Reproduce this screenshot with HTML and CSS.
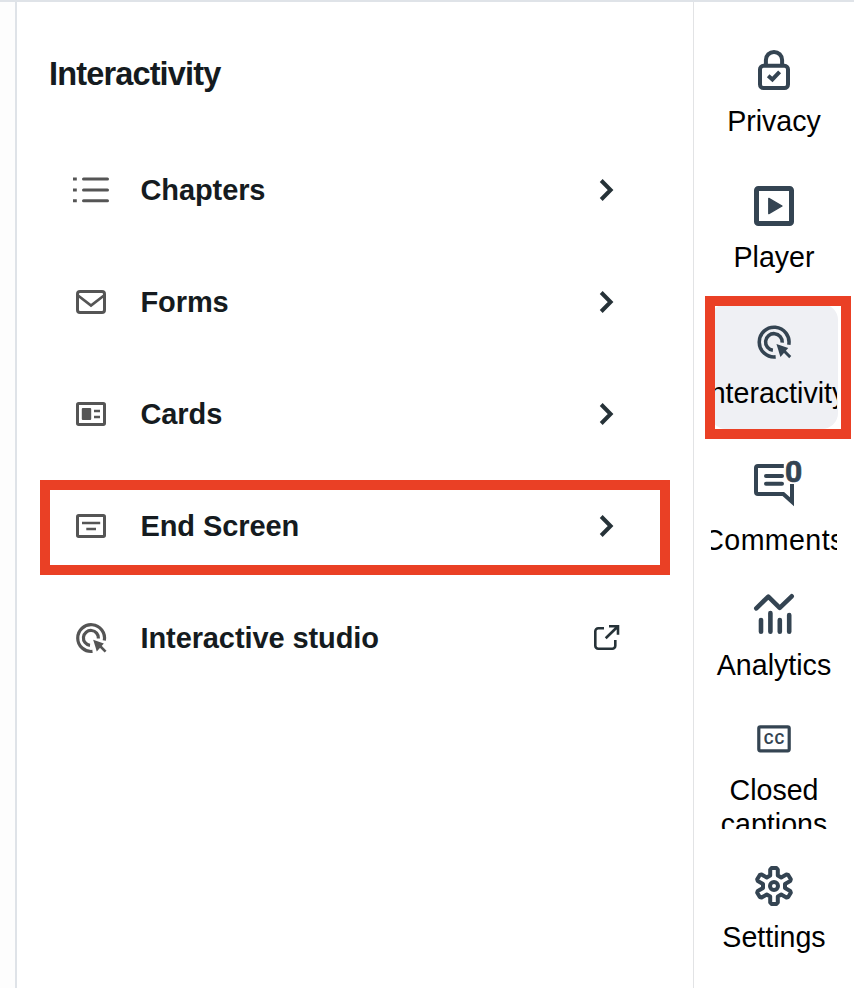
FILE: index.html
```html
<!DOCTYPE html>
<html lang="en">
<head>
    <meta charset="UTF-8">
    <meta name="viewport" content="width=device-width, initial-scale=1.0">
    <title>Interactivity</title>
    <link rel="stylesheet" href="styles.css">
</head>
<body>
    <!-- Shared icons -->
    <svg class="sprite" aria-hidden="true">
        <symbol id="chevron" viewBox="0 0 28 28">
            <path d="M9.2 4.5 18.6 14l-9.4 9.5" fill="none" stroke="currentColor" stroke-width="4"/>
        </symbol>
        <symbol id="target" viewBox="0 0 36 36">
            <g fill="none" stroke="currentColor" stroke-width="3.2">
                <path d="M31.3 20.5A13.4 13.4 0 1 0 19.5 31.4"/>
                <path d="M25.4 18.5A7.5 7.5 0 1 0 17 25.4"/>
                <path d="M26 25l6.6 6.6" stroke-width="2.6"/>
            </g>
            <path d="M20.2 19.8 30.8 23.4 23.8 31.4Z" fill="currentColor"/>
        </symbol>
    </svg>

    <div class="layout">
        <main class="panel">
            <h1>Interactivity</h1>

            <div class="menu">
                <a class="menu-item">
                    <svg class="menu-icon" viewBox="0 0 36 36" fill="none" stroke="currentColor" stroke-width="3">
                        <path d="M0 7h3.8M0 18h3.8M0 28.8h3.8"/>
                        <path d="M10.5 7h24M10.5 18h24M10.5 28.8h24" stroke-linecap="round"/>
                    </svg>
                    <span class="menu-label">Chapters</span>
                    <svg class="menu-arrow"><use href="#chevron"/></svg>
                </a>
                <a class="menu-item">
                    <svg class="menu-icon" viewBox="0 0 36 36" fill="none" stroke="currentColor" stroke-width="3">
                        <rect x="4.5" y="7.5" width="27" height="21" rx="2.5"/>
                        <path d="M5 11.5 18 21.6 31 11.5" stroke-width="2.8"/>
                    </svg>
                    <span class="menu-label">Forms</span>
                    <svg class="menu-arrow"><use href="#chevron"/></svg>
                </a>
                <a class="menu-item">
                    <svg class="menu-icon" viewBox="0 0 36 36" fill="none" stroke="currentColor" stroke-width="3">
                        <rect x="4.5" y="7.5" width="27" height="21" rx="1.2"/>
                        <rect x="8.8" y="12" width="9.4" height="12" rx="1" fill="currentColor" stroke="none"/>
                        <path d="M21 15h6M21 21h6" stroke-width="2.6"/>
                    </svg>
                    <span class="menu-label">Cards</span>
                    <svg class="menu-arrow"><use href="#chevron"/></svg>
                </a>
                <a class="menu-item highlighted">
                    <svg class="menu-icon" viewBox="0 0 36 36" fill="none" stroke="currentColor" stroke-width="3">
                        <rect x="4.5" y="7.5" width="27" height="21" rx="1.2"/>
                        <path d="M9 15h18.2M13.3 21h9.7" stroke-width="2.7"/>
                    </svg>
                    <span class="menu-label">End Screen</span>
                    <svg class="menu-arrow"><use href="#chevron"/></svg>
                </a>
                <a class="menu-item">
                    <svg class="menu-icon"><use href="#target"/></svg>
                    <span class="menu-label">Interactive studio</span>
                    <svg class="menu-arrow" viewBox="0 0 28 28" fill="none" stroke="currentColor" stroke-width="2.6">
                        <path d="M12 4.3H6.3a3 3 0 0 0-3 3v14.5a3 3 0 0 0 3 3h14a3 3 0 0 0 3-3V16"/>
                        <path d="M17 2.3h9v8.4M26 2.3 13.7 14.3"/>
                    </svg>
                </a>
            </div>
        </main>

        <nav class="sidebar">
            <a class="nav-item spaced">
                <svg class="nav-icon" viewBox="0 0 40 40" fill="none" stroke="currentColor" stroke-width="4">
                    <rect x="6" y="15.8" width="28" height="22.2" rx="3.5"/>
                    <path d="M11.9 16V10a8.1 8.1 0 0 1 16.2 0v6M14.2 25.8l4.2 3.6 7.2-7.6"/>
                </svg>
                <span class="nav-label">Privacy</span>
            </a>
            <a class="nav-item spaced">
                <svg class="nav-icon" viewBox="0 0 40 40">
                    <rect x="2.5" y="2.5" width="35" height="35" rx="1.8" fill="none" stroke="currentColor" stroke-width="5"/>
                    <path d="M14.8 12.4 28 20 14.8 27.6Z" fill="currentColor" stroke="currentColor" stroke-width="1.4" stroke-linejoin="round"/>
                </svg>
                <span class="nav-label">Player</span>
            </a>
            <a class="nav-item spaced active">
                <svg class="nav-icon"><use href="#target"/></svg>
                <span class="nav-label">Interactivity</span>
            </a>
            <a class="nav-item">
                <svg class="nav-icon tall" viewBox="0 0 40 51" fill="none" stroke="currentColor" stroke-width="4">
                    <path d="M29.8 8H4a2 2 0 0 0-2 2v24a2 2 0 0 0 2 2h25.3L38 43.8V26"/>
                    <path d="M12 18h16M12 25.8h16" stroke-linecap="round"/>
                    <text class="count" x="39.5" y="23.5">0</text>
                </svg>
                <span class="nav-label long">Comments</span>
            </a>
            <a class="nav-item">
                <svg class="nav-icon" viewBox="0 0 40 40" fill="none" stroke="currentColor" stroke-width="4.6" stroke-linecap="round">
                    <path d="M2.3 14.3 14.3 2.6 25.7 13.8 37.7 2.3" stroke-linejoin="round"/>
                    <path d="M7 26v11.7M16.4 19v18.7M25.8 26v11.7M35.2 21v16.7"/>
                </svg>
                <span class="nav-label">Analytics</span>
            </a>
            <a class="nav-item">
                <svg class="nav-icon" viewBox="0 0 40 40">
                    <rect x="4.8" y="7.8" width="30.4" height="24" rx="1.5" fill="none" stroke="currentColor" stroke-width="3.2"/>
                    <text class="cc" x="20.4" y="25.3">CC</text>
                </svg>
                <span class="nav-label two-lines">Closed<br>captions</span>
            </a>
            <a class="nav-item">
                <svg class="nav-icon" viewBox="-20 -20 40 40" fill="none" stroke="currentColor" stroke-width="4" stroke-linejoin="round">
                    <path d="M-3.8-10.5V-16.5L-2.5-17.9H2.5L3.8-16.5V-10.5L7.2-8.5 12.4-11.5 14.2-11 16.8-6.7 16.2-5 11-2V2L16.2 5 16.8 6.7 14.2 11 12.4 11.5 7.2 8.5 3.8 10.5V16.5L2.5 17.9H-2.5L-3.8 16.5V10.5L-7.2 8.5-12.4 11.5-14.2 11-16.8 6.7-16.2 5-11 2V-2L-16.2-5-16.8-6.7-14.2-11-12.4-11.5-7.2-8.5Z"/>
                    <circle r="4"/>
                </svg>
                <span class="nav-label">Settings</span>
            </a>
        </nav>
    </div>
</body>
</html>
```
FILE: styles.css
```css
:root {
    --text-color: #151b20;
    --icon-color: #555;
    --nav-icon-color: #344452;
    --border-color: #dfe3e8;
    --highlight-color: #ea4025;
}

* {
    box-sizing: border-box;
}

body {
    margin: 0;
    font-family: "Liberation Sans", Arial, sans-serif;
    font-size: 28.6px;
    background-color: #fff;
    color: var(--text-color);
}

.sprite {
    display: none;
}

.layout {
    display: flex;
    height: 988px;
    padding-left: 15px;
    border-top: 2px solid var(--border-color);
    background-color: #fdfdfd;
    overflow: hidden;
}

/* Main panel */
.panel {
    flex: 1;
    padding: 52px 23px 0;
    border-left: 2px solid var(--border-color);
    background-color: #fff;
}

h1 {
    margin: 0 0 60px;
    padding-left: 9px;
    font-size: 32.5px;
    line-height: 40px;
    letter-spacing: -0.85px;
}

.menu {
    display: flex;
    flex-direction: column;
    gap: 40px;
}

.menu-item {
    position: relative;
    display: flex;
    align-items: center;
    height: 72px;
    padding: 0 50px 0 33px;
}

.menu-icon {
    width: 36px;
    height: 36px;
    margin-right: 31.5px;
    color: var(--icon-color);
}

.menu-label {
    flex: 1;
    font-size: 29px;
    line-height: 34px;
    font-weight: bold;
    letter-spacing: -0.1px;
}

.menu-arrow {
    width: 28px;
    height: 28px;
    color: #263238;
}

/* Sidebar */
.sidebar {
    width: 161px;
    padding: 30px 16px 0;
    border-left: 1px solid #e2e3e5;
    background-color: #fff;
    color: #000;
}

.nav-item {
    position: relative;
    display: flex;
    flex-direction: column;
    align-items: center;
    padding: 18px 1px 19px;
    border-radius: 16px;
}

.nav-item.spaced {
    margin-bottom: 11px;
}

.nav-item.active {
    background-color: #eff0f4;
}

.nav-icon {
    width: 40px;
    height: 40px;
    margin-bottom: 14px;
    color: var(--nav-icon-color);
    overflow: visible;
}

.nav-icon.tall {
    height: 51px;
}

.nav-label {
    display: flex;
    justify-content: center;
    width: 126px;
    height: 34px;
    line-height: 35px;
    white-space: nowrap;
    overflow: hidden;
}

.nav-label.long {
    letter-spacing: 0.4px;
}

.nav-label.two-lines {
    display: block;
    height: 56px;
    line-height: 34px;
    text-align: center;
}

.count,
.cc {
    fill: currentColor;
    stroke: none;
    font-family: Roboto, "Liberation Sans", sans-serif;
    font-weight: bold;
    text-anchor: middle;
}

.count {
    font-size: 30px;
    stroke: currentColor;
    stroke-width: 0.7px;
}

.cc {
    font-size: 15px;
    letter-spacing: 0.8px;
}

/* Red frames */
.highlighted::after,
.active::after {
    content: "";
    position: absolute;
    border: 10px solid var(--highlight-color);
}

.highlighted::after {
    inset: -10px 0 -13px;
}

.active::after {
    inset: -8px -13px -10px -5px;
}
```
